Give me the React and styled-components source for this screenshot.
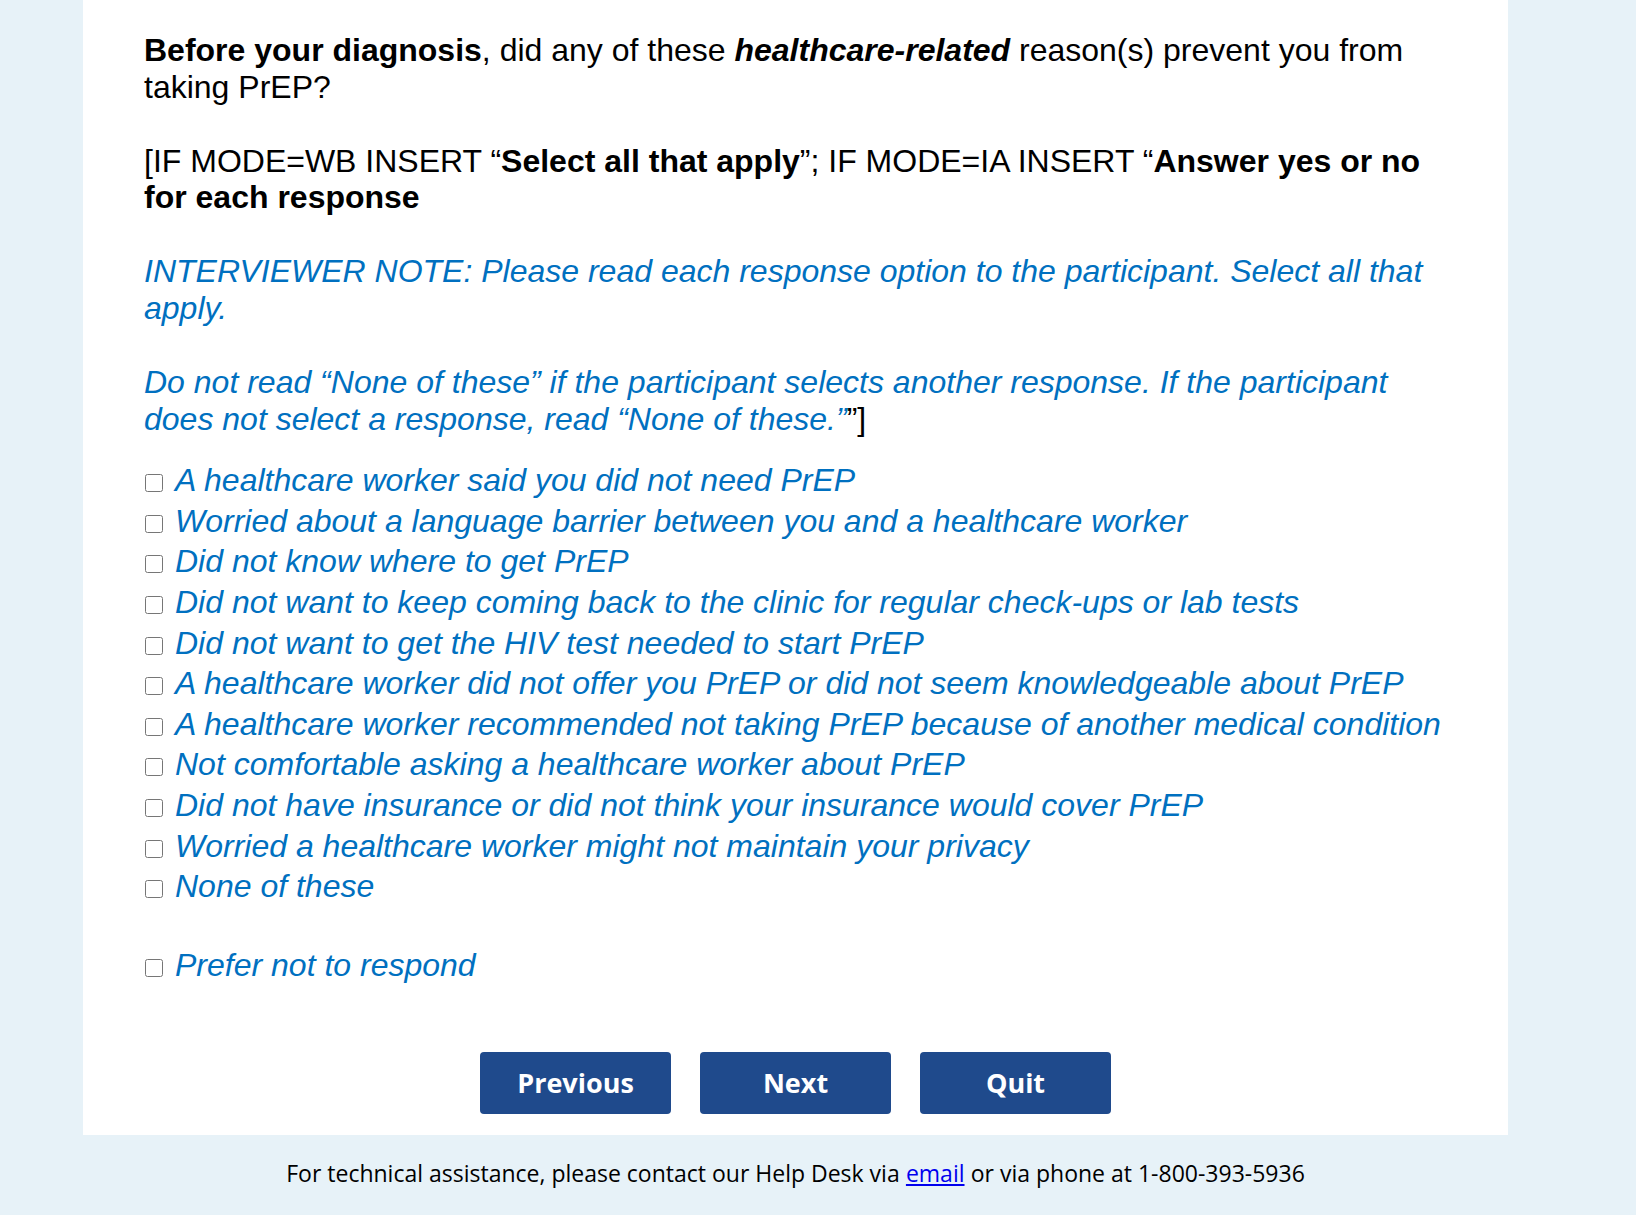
import React from 'react';
import styled, { createGlobalStyle } from 'styled-components';

const GlobalStyle = createGlobalStyle`
  html, body {
    margin: 0;
    padding: 0;
    background: #e7f2f8;
  }
  body {
    font-family: "Liberation Sans", Arial, sans-serif;
  }
`;

const Page = styled.div`
  width: 1425px;
  margin-left: 83px;
  min-height: 1215px;
  display: flex;
  flex-direction: column;
`;

const Panel = styled.main`
  background: #ffffff;
  padding: 32px 58px 21px 61px;
`;

const Question = styled.div`
  display: flex;
  flex-direction: column;
  gap: 37px;
  width: 1306px;
`;

const Para = styled.p`
  margin: 0;
  font-size: 32px;
  line-height: 36.8px;
  color: ${props => (props.note ? '#0070c0' : '#000000')};
  font-style: ${props => (props.note ? 'italic' : 'normal')};
`;

const Dark = styled.span`
  color: #000000;
  font-style: normal;
`;

const Options = styled.ul`
  list-style: none;
  margin: 23px 0 0;
  padding: 0;
`;

const Option = styled.li`
  display: flex;
  align-items: center;
  height: 40.6px;
  margin-top: ${props => (props.spaced ? '38px' : '0')};
`;

const Check = styled.input.attrs({ type: 'checkbox' })`
  width: 18px;
  height: 18px;
  margin: 5px 12px 0 1px;
  flex: none;
`;

const OptionText = styled.label`
  font-size: 32px;
  font-style: italic;
  color: #0070c0;
  white-space: nowrap;
  line-height: 36.8px;
`;

const ButtonRow = styled.div`
  display: flex;
  justify-content: center;
  gap: 29px;
  margin-top: 66px;
  margin-left: -3px;
`;

const NavButton = styled.button`
  width: 191px;
  height: 62px;
  border: none;
  border-radius: 4px;
  background: #1f4a8c;
  color: #ffffff;
  font-family: "Open Sans", "Noto Sans", sans-serif;
  font-weight: 700;
  font-size: 27px;
  cursor: pointer;
`;

const Footer = styled.footer`
  height: 80px;
  padding-bottom: 4px;
  box-sizing: border-box;
  display: flex;
  align-items: center;
  justify-content: center;
  font-family: "Open Sans", "Noto Sans", sans-serif;
  font-size: 23px;
  color: #000000;
`;

const Link = styled.a`
  color: #0000ee;
  text-decoration: underline;
  margin: 0 0.27em;
`;

const options = [
  'A healthcare worker said you did not need PrEP',
  'Worried about a language barrier between you and a healthcare worker',
  'Did not know where to get PrEP',
  'Did not want to keep coming back to the clinic for regular check-ups or lab tests',
  'Did not want to get the HIV test needed to start PrEP',
  'A healthcare worker did not offer you PrEP or did not seem knowledgeable about PrEP',
  'A healthcare worker recommended not taking PrEP because of another medical condition',
  'Not comfortable asking a healthcare worker about PrEP',
  'Did not have insurance or did not think your insurance would cover PrEP',
  'Worried a healthcare worker might not maintain your privacy',
  'None of these',
];

export default function App() {
  return (
    <>
      <GlobalStyle />
      <Page>
        <Panel>
          <Question>
            <Para>
              <b>Before your diagnosis</b>, did any of these <b><i>healthcare-related</i></b> reason(s) prevent you from taking PrEP?
            </Para>
            <Para>
              [IF MODE=WB INSERT “<b>Select all that apply</b>”; IF MODE=IA INSERT “<b>Answer yes or no for each response</b>
            </Para>
            <Para note>
              INTERVIEWER NOTE: Please read each response option to the participant. Select all that apply.
            </Para>
            <Para note>
              Do not read “None of these” if the participant selects another response. If the participant does not select a response, read “None of these.”<Dark>”]</Dark>
            </Para>
          </Question>
          <Options>
            {options.map((text, i) => (
              <Option key={i}>
                <Check id={`opt-${i}`} />
                <OptionText htmlFor={`opt-${i}`}>{text}</OptionText>
              </Option>
            ))}
            <Option spaced>
              <Check id="opt-refuse" />
              <OptionText htmlFor="opt-refuse">Prefer not to respond</OptionText>
            </Option>
          </Options>
          <ButtonRow>
            <NavButton>Previous</NavButton>
            <NavButton>Next</NavButton>
            <NavButton>Quit</NavButton>
          </ButtonRow>
        </Panel>
        <Footer>
          For technical assistance, please contact our Help Desk via<Link href="#">email</Link>or via phone at 1-800-393-5936
        </Footer>
      </Page>
    </>
  );
}
